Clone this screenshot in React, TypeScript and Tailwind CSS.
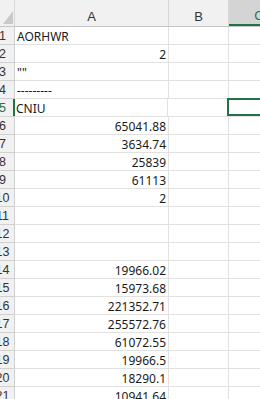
const rows: { n: number; v: string; right?: boolean }[] = [
  { n: 1, v: 'AORHWR' },
  { n: 2, v: '2', right: true },
  { n: 3, v: '""' },
  { n: 4, v: '---------' },
  { n: 5, v: 'CNIU' },
  { n: 6, v: '65041.88', right: true },
  { n: 7, v: '3634.74', right: true },
  { n: 8, v: '25839', right: true },
  { n: 9, v: '61113', right: true },
  { n: 10, v: '2', right: true },
  { n: 11, v: '' },
  { n: 12, v: '' },
  { n: 13, v: '' },
  { n: 14, v: '19966.02', right: true },
  { n: 15, v: '15973.68', right: true },
  { n: 16, v: '221352.71', right: true },
  { n: 17, v: '255572.76', right: true },
  { n: 18, v: '61072.55', right: true },
  { n: 19, v: '19966.5', right: true },
  { n: 20, v: '18290.1', right: true },
  { n: 21, v: '10941.64', right: true },
]

const SELECTED_ROW = 5

export default function App() {
  return (
    <div className="h-[399px] w-[260px] overflow-hidden bg-white font-['Noto_Sans',sans-serif] text-[12px] text-[#1b1b1b]">
      {/* column headers */}
      <div className="flex h-[27px] border-b border-[#c5c5c5] bg-[#f1f1f1] font-['Liberation_Sans',sans-serif] text-[13px] leading-[14px] text-[#333]">
        <div className="relative w-[15px] shrink-0 border-r border-[#d6d6d6]">
          <svg className="absolute left-0 top-0" width="14" height="26" viewBox="0 0 14 26">
            <polygon points="3,24 13,24 13,11" fill="#c9c9c9" />
          </svg>
        </div>
        <div className="flex w-[154px] shrink-0 items-end justify-center border-r border-[#d6d6d6] pb-[2px]">A</div>
        <div className="flex w-[60px] shrink-0 items-end justify-center border-r border-[#d6d6d6] pb-[2px]">B</div>
        <div className="flex w-[60px] shrink-0 items-end justify-center border-b-2 border-[#217346] bg-[#d4d4d4] pb-px text-[#217346]">C</div>
      </div>

      {rows.map((r) => {
        const sel = r.n === SELECTED_ROW
        return (
          <div key={r.n} className="flex h-[18px]">
            <div
              className={`flex w-[15px] shrink-0 items-end overflow-hidden border-b bg-[#f1f1f1] font-['Liberation_Sans',sans-serif] text-[12.5px] leading-[15px] ${
                sel ? 'border-r-2 border-b-[#d6d6d6] border-r-[#217346] text-[#217346]' : 'border-r border-[#d0d0d0] text-[#333]'
              }`}
            >
              <div className="-ml-[10px] w-[25px] shrink-0 text-center">{r.n}</div>
            </div>
            <div
              className={`flex w-[154px] shrink-0 items-end border-b border-r border-[#e1e1e1] px-[2px] leading-[15px] ${
                r.right ? 'justify-end' : 'justify-start'
              } ${sel ? '-ml-px' : ''}`}
            >
              {r.v}
            </div>
            <div className="w-[60px] shrink-0 border-b border-r border-[#e1e1e1]" />
            <div className="relative flex-1 border-b border-[#e1e1e1]">
              {sel && <div className="absolute -left-px -top-px bottom-0 right-[-4px] border-2 border-[#217346]" />}
            </div>
          </div>
        )
      })}
    </div>
  )
}
